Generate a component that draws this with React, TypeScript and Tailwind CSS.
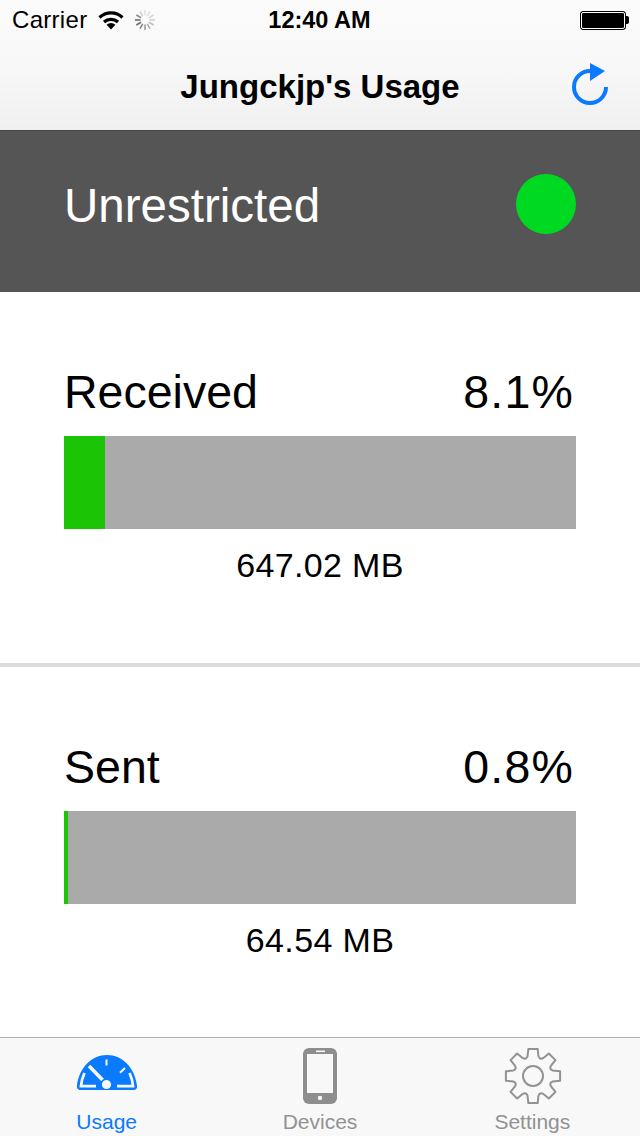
const font = { fontFamily: '"Liberation Sans", Arial, sans-serif' };

// 8 tooth gear outline around 0,0, curved roots between the teeth
function gearPath(outer: number, base: number, root: number) {
  const teeth = 8;
  const step = (2 * Math.PI) / teeth;
  const at = (r: number, t: number) => `${(r * Math.cos(t)).toFixed(2)} ${(r * Math.sin(t)).toFixed(2)}`;
  let d = "";
  for (let i = 0; i < teeth; i++) {
    const a = i * step - Math.PI / 2;
    d += `${i === 0 ? "M" : "L"}${at(base, a - 0.27)}L${at(outer, a - 0.17)}L${at(outer, a + 0.17)}L${at(base, a + 0.27)}`;
    d += `Q${at(root, a + step / 2)} ${at(base, a + step - 0.27)}`;
  }
  return d + "Z";
}

function Wifi() {
  return (
    <svg width="26" height="20" viewBox="0 0 26 20" className="ml-[11px]">
      <path d="M1.5 7.5a16.5 16.5 0 0 1 23 0" fill="none" stroke="#000" strokeWidth="3.2" />
      <path d="M6 12a10.5 10.5 0 0 1 14 0" fill="none" stroke="#000" strokeWidth="3.2" />
      <path d="M8.6 14.8a6.2 6.2 0 0 1 8.8 0L13 19.5z" fill="#000" />
    </svg>
  );
}

function Spinner() {
  const shades = ["#e2e2e2", "#e0e0e0", "#d8d8d8", "#cccccc", "#bdbdbd", "#aaaaaa", "#969696", "#808080", "#6c6c6c", "#606060", "#8c8c8c", "#d0d0d0"];
  return (
    <svg width="22" height="22" viewBox="-11 -11 22 22" className="ml-[10px]">
      {shades.map((c, i) => (
        <line key={i} x1="0" y1="-4.5" x2="0" y2="-10" stroke={c} strokeWidth="1.5" transform={`rotate(${i * 30})`} />
      ))}
    </svg>
  );
}

function Battery() {
  return (
    <div className="flex items-center">
      <div className="w-[46px] h-[19px] rounded-[3px] border border-black bg-black outline outline-1 -outline-offset-2 outline-white" />
      <div className="w-[3px] h-[8px] bg-black rounded-r-[2px]" />
    </div>
  );
}

function Refresh() {
  return (
    <svg width="40" height="48" viewBox="0 0 40 48" className="block">
      <path d="M36 26a16 16 0 1 1-16-16" fill="none" stroke="#0a7aff" strokeWidth="4" />
      <path d="M20 2l15 8-15 10z" fill="#0a7aff" />
    </svg>
  );
}

function UsageBlock({ title, pct, width, amount }: { title: string; pct: string; width: number; amount: string }) {
  return (
    <section className="flex-1 bg-white px-[64px] pt-[72px]">
      <div className="flex justify-between items-center h-[56px] text-[46.5px] leading-[56px] text-black">
        <span>{title}</span>
        <span className="mr-[2px] tracking-[1.2px]">{pct}</span>
      </div>
      <div className="mt-[16px] h-[93px] bg-[#aaaaaa]">
        <div className="h-full bg-[#1bc404]" style={{ width }} />
      </div>
      <div className="mt-[16px] text-center text-[34px] leading-[40px] tracking-[0.35px] text-black">{amount}</div>
    </section>
  );
}

export default function App() {
  return (
    <div className="w-[640px] h-[1136px] flex flex-col bg-white overflow-hidden" style={font}>
      {/* status + nav */}
      <header className="h-[130px] shrink-0 bg-gradient-to-b from-[#fbfbfb] via-[#f8f8f8] to-[#f0f0f0]">
        <div className="h-[40px] grid grid-cols-3 items-center pl-[12px] pr-[11px] text-[24px] text-black">
          <div className="flex items-center">
            <span className="tracking-[0.3px]">Carrier</span>
            <Wifi />
            <Spinner />
          </div>
          <span className="text-center font-bold text-[23.5px] whitespace-nowrap pt-[2px] pr-[2px]">12:40 AM</span>
          <div className="flex justify-end">
            <Battery />
          </div>
        </div>
        <div className="h-[90px] relative flex items-center justify-center pt-[3px]">
          <span className="text-[33px] font-bold text-black">Jungckjp's Usage</span>
          <div className="absolute right-[30px] top-[21px]">
            <Refresh />
          </div>
        </div>
      </header>

      {/* restriction state */}
      <div className="h-[162px] shrink-0 bg-[#555555] border-t border-[#464646] flex items-center justify-between pl-[64px] pr-[64px] pb-[16px]">
        <span className="text-[47.5px] text-white pt-[4px]">Unrestricted</span>
        <div className="w-[60px] h-[60px] rounded-full bg-[#00d921]" />
      </div>

      <div className="h-[371px] shrink-0 flex flex-col">
        <UsageBlock title="Received" pct="8.1%" width={41} amount="647.02 MB" />
      </div>
      <div className="h-[4px] shrink-0 bg-[#dcdcdc]" />
      <div className="h-[370px] shrink-0 flex flex-col">
        <UsageBlock title="Sent" pct="0.8%" width={4} amount="64.54 MB" />
      </div>

      {/* tab bar */}
      <nav className="h-[99px] shrink-0 bg-[#f8f8f8] border-t border-[#b2b2b2] grid grid-cols-3">
        <div className="flex flex-col items-center">
          <svg width="60" height="35" viewBox="0 0 60 35" className="mt-[17px] mb-[20px]">
            <path d="M0 30.5C2 13 14.5 0 30 0s28 13 30 30.5A3.5 3.5 0 0 1 56.5 35H42a12 7 0 0 1-24 0H3.5A3.5 3.5 0 0 1 0 30.5z" fill="#0a7aff" />
            <path d="M7.5 18Q4.6 24 4 31.2H19M52.5 18Q55.4 24 56 31.2H40" fill="none" stroke="#f8f8f8" strokeWidth="2.8" />
            <path d="M29.5 4.5v6M48 13l-5 4.8" stroke="#f8f8f8" strokeWidth="2" />
            <path d="M12 11L29.5 29" stroke="#f8f8f8" strokeWidth="3.6" />
            <circle cx="29.5" cy="29.5" r="5.4" fill="#f8f8f8" stroke="#0a7aff" strokeWidth="1.6" />
          </svg>
          <span className="text-[21px] leading-[24px] text-[#0a7aff]">Usage</span>
        </div>
        <div className="flex flex-col items-center">
          <svg width="34" height="56" viewBox="0 0 34 56" className="mt-[10px] mb-[6px]">
            <rect width="34" height="56" rx="6" fill="#8e8e8e" />
            <rect x="4" y="6" width="26" height="39" fill="#f8f8f8" />
            <rect x="13" y="2.5" width="9" height="1.6" fill="#f8f8f8" />
            <circle cx="17" cy="50" r="2.2" fill="#f8f8f8" />
          </svg>
          <span className="text-[21px] leading-[24px] text-[#929292]">Devices</span>
        </div>
        <div className="flex flex-col items-center">
          <svg width="58" height="58" viewBox="-29 -29 58 58" className="mt-[9px] mb-[5px]">
            <path d={gearPath(27.5, 20.5, 17.5)} fill="none" stroke="#929292" strokeWidth="2" strokeLinejoin="round" />
            <circle r="10" fill="none" stroke="#929292" strokeWidth="2" />
          </svg>
          <span className="text-[21px] leading-[24px] text-[#929292] mr-[2px]">Settings</span>
        </div>
      </nav>
    </div>
  );
}
